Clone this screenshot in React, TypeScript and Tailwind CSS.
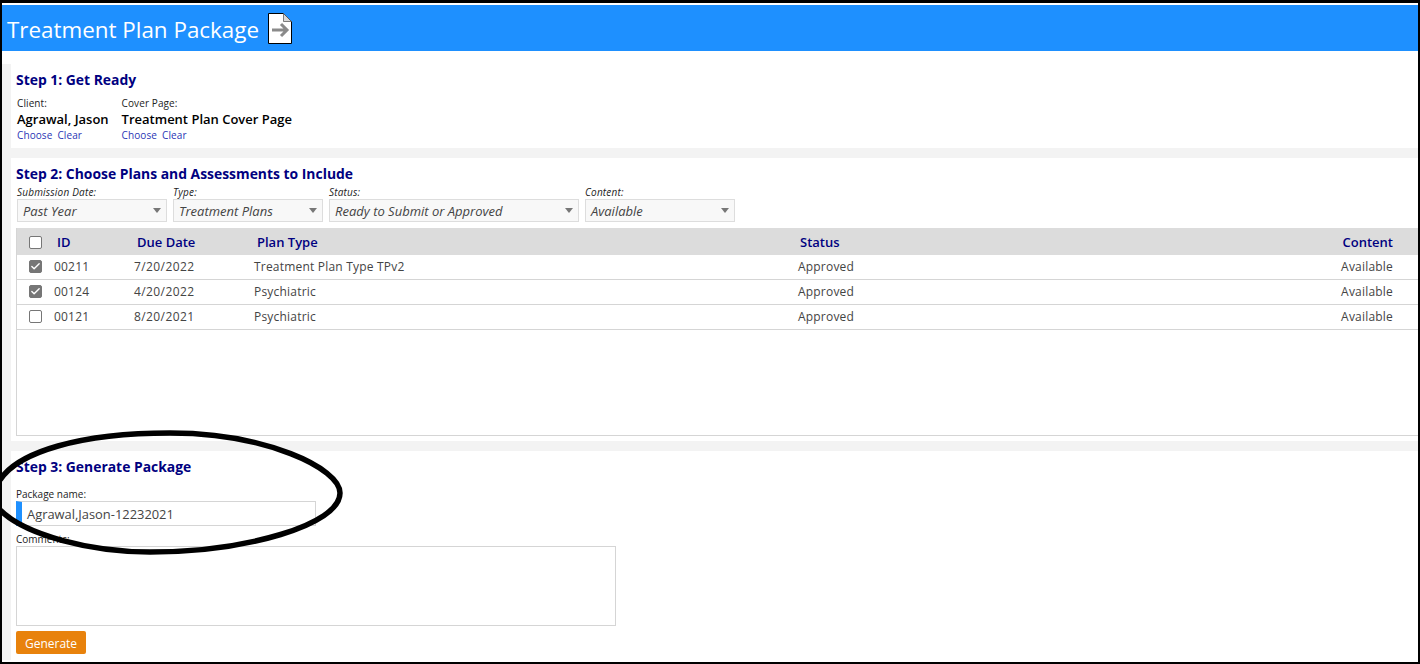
import { Check } from 'lucide-react';

const filters = [
  { label: 'Submission Date:', value: 'Past Year', width: 'w-[150px]' },
  { label: 'Type:', value: 'Treatment Plans', width: 'w-[150px]' },
  { label: 'Status:', value: 'Ready to Submit or Approved', width: 'w-[250px]' },
  { label: 'Content:', value: 'Available', width: 'w-[150px]' },
];

const rows = [
  { id: '00211', due: '7/20/2022', type: 'Treatment Plan Type TPv2', checked: true },
  { id: '00124', due: '4/20/2022', type: 'Psychiatric', checked: true },
  { id: '00121', due: '8/20/2021', type: 'Psychiatric', checked: false },
];

function Box({ checked }: { checked: boolean }) {
  return (
    <span
      className={`flex h-[13px] w-[13px] items-center justify-center rounded-[2px] border ${
        checked ? 'border-[#767676] bg-[#767676]' : 'border-[#767676] bg-white'
      }`}
    >
      {checked && <Check size={11} strokeWidth={3} className="text-white" />}
    </span>
  );
}

function Heading({ children }: { children: string }) {
  return <h2 className="text-[13.9px] font-bold leading-[20px] text-[#000080]">{children}</h2>;
}

function Picker({ label, value }: { label: string; value: string }) {
  return (
    <div>
      <div className="text-[10px] leading-[14px] tracking-[0.1px] text-[#222]">{label}</div>
      <div className="text-[13px] font-semibold leading-[18px] text-black">{value}</div>
      <div className="flex gap-[5px] text-[10px] leading-[14px] tracking-[0.1px] text-[#2a35b5]">
        <span>Choose</span>
        <span>Clear</span>
      </div>
    </div>
  );
}

export default function App() {
  return (
    <div className="relative h-[664px] w-[1420px] overflow-hidden border-x-2 border-t-[3px] border-b-2 border-black bg-white pt-[2px] font-['Open_Sans','Noto_Sans',sans-serif] text-[#444]">
      <header className="flex h-[46px] items-center gap-[9px] bg-[#1e90ff] pl-[5px] text-white">
        <span className="mt-[4px] text-[22.4px]">Treatment Plan Package</span>
        <svg width="24" height="31" viewBox="0 0 24 31" className="mt-[1px]">
          <path d="M0.5 0.5h15l8 8v22h-23z" fill="#fff" stroke="#000" strokeWidth="1" />
          <path d="M15.5 0.5v8h8z" fill="#d8d8d8" stroke="#555" strokeWidth="0.75" />
          <path d="M4 17h14M13 11l6 6-6 6" fill="none" stroke="#8a8a8a" strokeWidth="3" />
        </svg>
      </header>

      <div className="mt-[13px] flex flex-col gap-[10px] bg-[#f3f3f3] pl-[9px]">
        <section className="h-[84px] bg-white pl-[5px] pt-[6px]">
          <Heading>Step 1: Get Ready</Heading>
          <div className="mt-[6px] flex gap-[13px] pl-[1px]">
            <Picker label="Client:" value="Agrawal, Jason" />
            <Picker label="Cover Page:" value="Treatment Plan Cover Page" />
          </div>
        </section>

        <section className="h-[283px] bg-white pl-[5px] pt-[6px]">
          <Heading>Step 2: Choose Plans and Assessments to Include</Heading>
          <div className="mt-[1px] flex gap-[6px] pl-[1px]">
            {filters.map((f) => (
              <div key={f.label} className={f.width}>
                <div className="text-[10px] italic leading-[14px] tracking-[0.2px] text-[#222]">{f.label}</div>
                <div className="flex h-[23px] items-center justify-between border border-[#ddd] bg-[#f8f8f8] px-[5px] text-[13px] italic text-[#444]">
                  <span className="mt-[2px]">{f.value}</span>
                  <span className="h-0 w-0 border-x-[4px] border-t-[5px] border-x-transparent border-t-[#777]" />
                </div>
              </div>
            ))}
          </div>

          <div className="mt-[6px] h-[208px] border-b border-l border-[#d5d5d5]">
            <div className="grid h-[27px] grid-cols-[40px_80px_120px_543px_1fr_auto] items-center bg-[#dcdcdc] pr-[25px] pt-[2px] text-[13px] font-semibold text-[#000080]">
              <span className="pl-[12px]">
                <Box checked={false} />
              </span>
              <span>ID</span>
              <span>Due Date</span>
              <span>Plan Type</span>
              <span>Status</span>
              <span>Content</span>
            </div>
            {rows.map((r) => (
              <div
                key={r.id}
                className="grid h-[25px] grid-cols-[37px_80px_120px_544px_1fr_auto] items-center border-b border-[#d5d5d5] pr-[25px] text-[12px] tracking-[0.2px] text-[#444]"
              >
                <span className="mb-[2px] pl-[12px]">
                  <Box checked={r.checked} />
                </span>
                <span>{r.id}</span>
                <span className="tracking-[0.4px]">{r.due}</span>
                <span>{r.type}</span>
                <span>Approved</span>
                <span>Available</span>
              </div>
            ))}
          </div>
        </section>

        <section className="h-[209px] bg-white pl-[5px] pt-[6px]">
          <Heading>Step 3: Generate Package</Heading>
          <div className="mt-[11px] text-[10px] leading-[13px] text-[#222]">Package name:</div>
          <div className="flex h-[25px] w-[300px] items-center border border-[#d5d5d5] border-l-[6px] border-l-[#1e90ff] pl-[5px] pt-[2px] text-[12.9px] text-[#444]">
            Agrawal,Jason-12232021
          </div>
          <div className="mt-[6px] text-[10px] leading-[14px] text-[#222]">Comments:</div>
          <div className="h-[80px] w-[600px] border border-[#d5d5d5]" />
          <button className="mt-[5px] h-[23px] w-[70px] rounded-[2px] bg-[#e8820c] pt-[2px] text-[12px] text-white">
            Generate
          </button>
        </section>
      </div>

      {/* hand drawn annotation circled on top of the screenshot */}
      <svg width="346" height="126" viewBox="0 0 346 126" className="absolute left-[-2px] top-[427px]">
        <path
          d="M0 50C18 22 80 3 170 3C265 3 340 38 340 63C340 95 245 122 150 122C90 122 25 105 0 80"
          fill="none"
          stroke="#000"
          strokeWidth="5.5"
        />
      </svg>
    </div>
  );
}
